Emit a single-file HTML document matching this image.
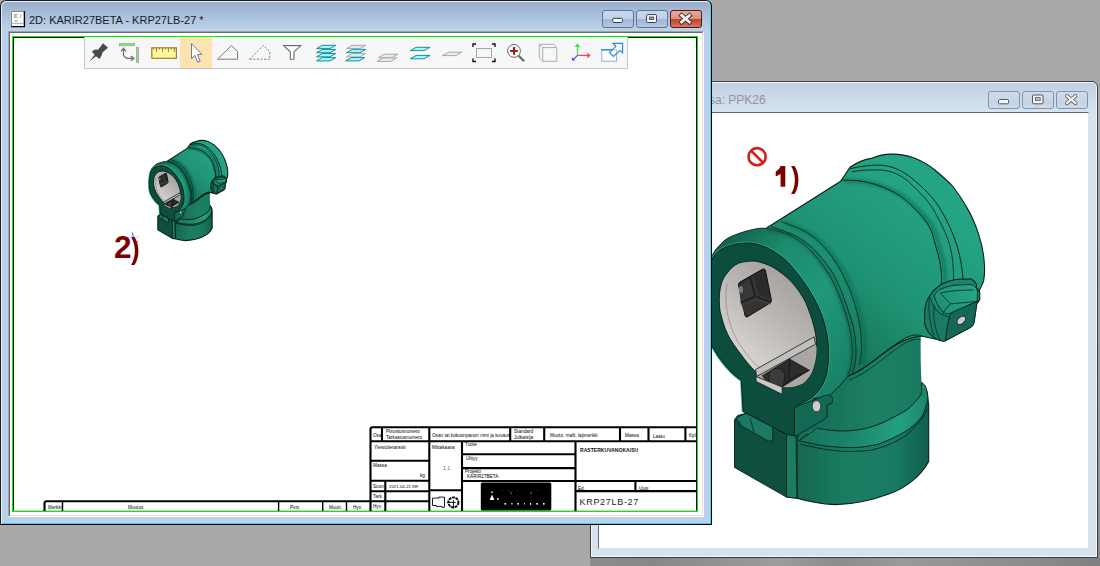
<!DOCTYPE html>
<html><head><meta charset="utf-8">
<style>
*{margin:0;padding:0;box-sizing:border-box}
html,body{width:1100px;height:566px;overflow:hidden;background:#a9a9a9;font-family:"Liberation Sans",sans-serif}
.abs{position:absolute}
svg{position:absolute;overflow:visible}
.tbtext{left:0;top:0}
.small path,.small ellipse{vector-effect:non-scaling-stroke}
.tbtext span{position:absolute;white-space:nowrap}
#desk-bottom{left:590px;top:558px;width:510px;height:8px;background:linear-gradient(90deg,#8c8c8c 0px,#878787 60px,#8f8f8f 110px,#9c9c9c 190px,#8b8b8b 250px,#9a9a9a 310px,#939393 370px,#8a8a8a 450px,#7f7f7f 510px)}
#desk-right{left:1098px;top:81px;width:2px;height:477px;background:linear-gradient(#a9a9a9,#a0a0a0 60%,#8a8a8a)}
/* right window */
#rw{left:590px;top:81px;width:508px;height:477px;border:1px solid #3a3a3a;border-radius:6px 6px 0 0;background:#d5e3f1;box-shadow:inset 1px 1px 0 #f4f8fc,inset -1px -1px 0 #f4f8fc}
#rw .tb{left:1px;top:1px;width:504px;height:30px;border-radius:5px 5px 0 0;background:linear-gradient(#c1d1e1,#d6e3f0)}
#rw .client{left:7px;top:30px;width:491px;height:437px;background:#fff;border-top:1px solid #666;border-left:1px solid #6d6d6d;border-right:1px solid #e2e2e2;border-bottom:1px solid #e2e2e2}
#rw .title{left:118px;top:10.8px;font-size:12px;color:#9a909c;white-space:nowrap}
.wbtn{position:absolute;top:9px;height:18px;width:32px;border:1px solid #8594ad;border-radius:3px;background:linear-gradient(#cfdceb 0,#c9d7e7 45%,#c3d3e4 55%,#cddbea 100%)}
/* left window */
#lw{left:0;top:0;width:712px;height:525px;border:1px solid #1c1c1c;border-right-color:#000;border-bottom-color:#000;border-radius:6px 6px 0 0;background:#b9d1ea;box-shadow:inset 1px 1px 0 #e8f0f8,inset -1px -1px 0 #44d0f0}
#lw .tb{left:1px;top:1px;width:708px;height:29px;border-radius:5px 5px 0 0;background:linear-gradient(#99afcc,#bcd3eb)}
#lw .client{left:7px;top:30px;width:696px;height:486px;background:#fff;border-top:1px solid #a0a0a0;border-left:1px solid #a0a0a0;border-right:1px solid #fff;border-bottom:1px solid #fff}
#lw .client .in{border-top:1px solid #6a6a6a;border-left:1px solid #6a6a6a}
#lw .client .in{left:0;top:0;right:0;bottom:0;border-right:1px solid #dedede;border-bottom:1px solid #dedede}
.lbtn{position:absolute;top:9px;height:18px;width:32px;border:1px solid #5f7594;border-radius:3px;background:linear-gradient(#c6d7eb 0,#bfd2e8 50%,#9fb7d3 52%,#b4cae3 100%)}
.cbtn{position:absolute;top:9px;height:18px;width:32px;border:1px solid #4c1a1f;border-radius:3px;background:linear-gradient(#eaa998 0,#df8e7a 50%,#c4432b 52%,#d9755c 100%)}
#green{left:12px;top:36px;width:686px;height:476px;border:1px solid #00f000}
#black{left:13px;top:37px;width:684px;height:474px;border:1px solid #000;border-bottom-color:#d8c8d8}
</style></head><body>
<div id="desk-bottom" class="abs"></div><div id="desk-right" class="abs"></div>

<div id="rw" class="abs">
  <div class="tb abs"></div>
  <div class="title abs">sa: PPK26</div>
  <div class="wbtn" style="left:397px"></div>
  <div class="wbtn" style="left:431px"></div>
  <div class="wbtn" style="left:465px"></div>
  <div class="client abs"></div>

 <svg width="508" height="477" style="left:-1px;top:-1px">
  <rect x="408.5" y="18.5" width="10" height="4.3" rx="1" fill="#f4f4f4" stroke="#55555f" stroke-width="1"/>
  <rect x="442.5" y="14" width="10.5" height="8.8" rx="1" fill="#f4f4f4" stroke="#55555f" stroke-width="1"/>
  <rect x="445.4" y="16.6" width="4.8" height="2.8" fill="#b4c4d4" stroke="#55555f" stroke-width="0.8"/>
  <path d="M477,15 L485.5,22.2 M485.5,15 L477,22.2" stroke="#606068" stroke-width="3.8" stroke-linecap="round"/>
  <path d="M477,15 L485.5,22.2 M485.5,15 L477,22.2" stroke="#f6f6f6" stroke-width="2.2" stroke-linecap="round"/>
 </svg>
</div>

<!--MODEL-->
<svg width="1100" height="566" style="left:0;top:0"><defs>
<filter id="gBlur" x="-20%" y="-20%" width="140%" height="140%"><feGaussianBlur stdDeviation="1.6"/></filter>
<linearGradient id="gSock" x1="797" y1="0" x2="929" y2="0" gradientUnits="userSpaceOnUse">
 <stop offset="0" stop-color="#14684f"/><stop offset="0.4" stop-color="#1a7e63"/><stop offset="0.75" stop-color="#197a61"/><stop offset="1" stop-color="#115e4b"/></linearGradient>
<linearGradient id="gBand" x1="797" y1="0" x2="929" y2="0" gradientUnits="userSpaceOnUse">
 <stop offset="0" stop-color="#16715a"/><stop offset="0.45" stop-color="#1d886b"/><stop offset="0.78" stop-color="#23a080"/><stop offset="1" stop-color="#1b8467"/></linearGradient>
<linearGradient id="gPipe" x1="820" y1="0" x2="922" y2="0" gradientUnits="userSpaceOnUse">
 <stop offset="0" stop-color="#166f58"/><stop offset="0.55" stop-color="#1c8064"/><stop offset="1" stop-color="#1a7a61"/></linearGradient>
<linearGradient id="gBody" x1="820" y1="340" x2="930" y2="200" gradientUnits="userSpaceOnUse">
 <stop offset="0" stop-color="#177459"/><stop offset="0.45" stop-color="#1f9373"/><stop offset="1" stop-color="#24a483"/></linearGradient>
<linearGradient id="gFlange" x1="712" y1="250" x2="850" y2="370" gradientUnits="userSpaceOnUse">
 <stop offset="0" stop-color="#12604c"/><stop offset="0.28" stop-color="#1c8b6c"/><stop offset="0.6" stop-color="#20987a"/><stop offset="1" stop-color="#1a8266"/></linearGradient>
<linearGradient id="gGray" x1="805" y1="275" x2="735" y2="360" gradientUnits="userSpaceOnUse">
 <stop offset="0" stop-color="#a09c99"/><stop offset="0.5" stop-color="#bcb8b5"/><stop offset="1" stop-color="#dcd8d5"/></linearGradient>
<linearGradient id="gLugTop" x1="930" y1="300" x2="975" y2="282" gradientUnits="userSpaceOnUse">
 <stop offset="0" stop-color="#1e9070"/><stop offset="1" stop-color="#26a686"/></linearGradient>
</defs><path d="M797,436 C830,430 880,422 921.6,384 L927,392 L928.7,404.7 L928.7,461.6 C921,476 906,488 889.5,493.8 C870,501 850,504.6 835.3,504.6 C822,504 808,501.5 797,498.2 Z" fill="url(#gSock)" stroke="#061f19" stroke-width="1.08"/>
<path d="M800,330 L921,334 L920.7,338 C920.5,355 920.8,370 921.6,384.1 L921.6,393 C919,398 917,400 913.7,403.6 C908,410 902,413 896,416 C887,421 878,425 869.5,427.4 C860,430 851,431 843,431 C834,431 825,429.5 816.5,428.3 L798.8,438.9 Z" fill="url(#gPipe)"/>
<path d="M816.5,428.3 C825,429.5 834,431 843,431 C851,431 860,430 869.5,427.4 C878,425 887,421 896,416 C902,413 908,410 913.7,403.6 C917,400 919,398 921.6,393 L921.6,382.4 C924,384 925.5,385.5 926,387.7 C927.5,392 928,396 927.8,400 C926.5,406 924.5,411 922.5,416 C917,423 911,428 904.8,431.8 C896,437 887,441 878.3,444.2 C869,446.5 860,447.5 851.8,447.7 C842,447.5 834,447 825.3,446 C816,444.5 807,442.5 798.8,440.7 Z" fill="url(#gBand)" stroke="#061f19" stroke-width="0.94"/>
<path d="M800.6,444.2 C814,447.5 828,450.5 843,451.3 C852,451.5 861,451.2 869.5,450.4 C882,448 894,443 904.8,436.3 C914,429 922,420 927.8,408.9" fill="none" stroke="#061f19" stroke-width="0.81"/>
<path d="M767,227.7 L840.7,181.3 L850.2,167 C858,162 866,159 871.2,158.4 C878,155.5 886,154 892.4,154.1 C900,154 907,155.5 913.6,157.7 C922,161 929,165 934.8,170 C942,176 948,181 952.5,186 C958,193 962,199 966.6,207.1 C972,216 976,226 979,235.4 C982,245 984,255 984.3,263.7 C985,270 984.5,276 983.6,281.3 L975,300 L944,341 L921,336 C905,338 895,344 873,361.5 C862,369 855,374 847.6,376.3 L830,380 Z" fill="url(#gBody)" stroke="#061f19" stroke-width="1.08"/>
<path d="M847.6,376.3 C860,372 866,366 873,361.5 C885,352 892,346 904.8,338.2 C911,335 916,334 921.8,336" fill="none" stroke="#061f19" stroke-width="0.94"/>
<path d="M849,380 C862,375 868,370 875,365 C887,356 894,350 906,342.5 C912,339.5 916,339 921,340" fill="none" stroke="#061f19" stroke-width="0.68"/>
<path d="M850.2,168.6 C862,166 873,164.5 883.6,165.4 C896,167 906,173 915.4,181.3 C927,191 935,200 940.9,210 C948,222 953,233 956.8,245 C960,256 962,266 963.1,279.5" fill="none" stroke="#061f19" stroke-width="0.94"/>
<path d="M851.8,171.8 C862,170 872,169.5 883.6,170.2 C896,172 906,178 913,186 C925,197 932,206 937,216 C944,229 949,240 951,251 C953,260 953.5,268 953.6,280" fill="none" stroke="#061f19" stroke-width="0.81"/>
<path d="M844.2,181.0 C847.4,181.2 857.0,181.0 863.5,182.0 C870.0,183.0 876.8,184.5 883.5,187.0 C890.2,189.5 897.2,192.7 903.5,197.0 C909.8,201.3 916.5,207.7 921.5,213.0 C926.5,218.3 930.6,223.5 933.5,229.0 C936.4,234.5 937.2,240.7 938.8,246.0 C940.4,251.3 942.0,256.0 943.0,261.0 C944.0,266.0 944.8,271.3 945.0,276.0 C945.2,280.7 944.6,286.8 944.5,289.0" fill="none" stroke="#0f5a48" stroke-width="5" stroke-opacity="0.4" filter="url(#gBlur)"/>
<path d="M840.7,180.0 C843.9,180.2 853.5,180.0 860.0,181.0 C866.5,182.0 873.3,183.5 880.0,186.0 C886.7,188.5 893.7,191.7 900.0,196.0 C906.3,200.3 913.0,206.7 918.0,212.0 C923.0,217.3 927.1,222.5 930.0,228.0 C932.9,233.5 933.7,239.7 935.3,245.0 C936.9,250.3 938.5,255.0 939.5,260.0 C940.5,265.0 941.2,270.3 941.5,275.0 C941.8,279.7 941.1,285.8 941.0,288.0" fill="none" stroke="#061f19" stroke-width="0.94"/>
<path d="M925.1,308.4 C926,303 927.5,299 929.5,296.3 C931.5,292.5 934,290 936.5,288 C940,285 944,283 948,281.6 C951,280.5 955,279.6 958.2,279.3 L970.9,279.1 C973,280 975,281.5 976,283.5 C977,285 976.8,287 976.6,288 C978,289.5 979.5,291 979.8,293.1 L979.8,299.4 C979,301.5 977.5,303 976.6,303.9 L974.1,322.3 C973.5,325 972,326.5 970.3,327.4 L945.4,340.8 C942,341.5 939,340.5 936.5,338.9 C931,336 927,331 925,325 C924.5,319 924.6,313 925.1,308.4 Z" fill="#1b8669" stroke="#061f19" stroke-width="1.08"/>
<path d="M934,296 C936,292 938,290 942,288.5 C947,286.5 952,285.5 958,285 L970,284.5 C974,285 976.5,287.5 977.5,291 L977.2,301.4 L951,313 C948,314.5 945,314 943,312 C939,308 936,302 934,296 Z" fill="url(#gLugTop)" stroke="#061f19" stroke-width="0.81"/>
<path d="M940.4,293.1 C948,291 962,290 973.4,289.9 M950.5,303.9 C947,307 944,311 942.3,314.7 M940.4,293.1 L950.5,303.9 L977.2,301.4" fill="none" stroke="#061f19" stroke-width="0.74"/>
<path d="M951,313 L977.2,301.4 L974.1,322.3 C973.5,325 972,326.5 970.3,327.4 L945.4,340.8 C946,333 947.5,324 949.3,317.3 C949.8,315.5 950.3,314 951,313 Z" fill="#136955" stroke="#061f19" stroke-width="0.81"/>
<path d="M925.1,308.4 C926,303 927.5,299 929.5,296.3 C931,300 932,303 934,306 C936,310 939,313 942.3,314.7 C946,316 948,316.5 949.3,317.3 C947.5,324 946,333 945.4,340.8 C942,341.5 939,340.5 936.5,338.9 C931,336 927,331 925,325 C924.5,319 924.6,313 925.1,308.4 Z" fill="#187b62" stroke="#061f19" stroke-width="0.74"/>
<path d="M929.5,296.3 C928,306 929,320 934,336 M934,306 C933,318 935,330 940,340" fill="none" stroke="#061f19" stroke-width="0.68"/>
<ellipse cx="961.3" cy="320.4" rx="5" ry="3.2" transform="rotate(-42 961.3 320.4)" fill="#cfcfcf" stroke="#262626" stroke-width="0.94"/>
<path d="M708.0,268.0 C708.8,265.7 711.0,257.8 713.0,254.0 C715.0,250.2 717.3,247.7 720.0,245.0 C722.7,242.3 724.2,240.0 729.0,237.6 C733.8,235.2 742.4,232.0 748.7,230.5 C755.1,229.0 759.8,227.5 767.1,228.5 C774.4,229.5 785.1,232.8 792.4,236.5 C799.7,240.2 805.1,244.9 810.8,250.6 C816.4,256.2 822.1,264.2 826.3,270.4 C830.5,276.6 833.0,281.4 836.0,288.0 C839.0,294.6 842.1,303.0 844.4,310.0 C846.7,317.0 848.7,323.3 850.0,330.0 C851.3,336.7 852.0,344.2 852.2,350.0 C852.4,355.8 851.8,360.6 851.0,365.0 C850.2,369.4 848.2,374.4 847.6,376.3 C840,386 834,392 826,398 L760,400 Z" fill="url(#gFlange)" stroke="#061f19" stroke-width="0.94"/>
<path d="M767.1,228.5 C771.3,229.8 785.1,232.8 792.4,236.5 C799.7,240.2 805.1,244.9 810.8,250.6 C816.4,256.2 822.1,264.2 826.3,270.4 C830.5,276.6 833.0,281.4 836.0,288.0 C839.0,294.6 842.1,303.0 844.4,310.0 C846.7,317.0 848.7,323.3 850.0,330.0 C851.3,336.7 852.0,344.2 852.2,350.0 C852.4,355.8 851.8,360.6 851.0,365.0 C850.2,369.4 848.2,374.4 847.6,376.3" fill="none" stroke="#0f5a48" stroke-width="4" stroke-opacity="0.55" filter="url(#gBlur)"/>
<path d="M781.0,221.5 C785.2,223.2 798.8,227.8 806.0,232.0 C813.2,236.2 818.7,241.3 824.0,247.0 C829.3,252.7 833.8,259.2 838.0,266.0 C842.2,272.8 845.9,280.7 849.0,288.0 C852.1,295.3 854.5,303.0 856.4,310.0 C858.3,317.0 859.7,323.3 860.5,330.0 C861.3,336.7 861.6,344.2 861.4,350.0 C861.2,355.8 859.8,362.5 859.5,365.0" fill="none" stroke="#0f5a48" stroke-width="5" stroke-opacity="0.35" filter="url(#gBlur)" transform="translate(3,1)"/>
<path d="M771.0,226.5 C775.3,228.2 789.5,232.7 796.6,236.5 C803.7,240.3 808.0,243.8 813.6,249.2 C819.2,254.6 825.6,262.5 830.0,269.0 C834.4,275.5 837.0,281.2 840.0,288.0 C843.0,294.8 845.7,303.0 848.0,310.0 C850.3,317.0 852.7,323.3 854.0,330.0 C855.3,336.7 855.8,344.3 856.0,350.0 C856.2,355.7 855.7,360.0 855.0,364.0 C854.3,368.0 852.5,372.3 852.0,374.0" fill="none" stroke="#061f19" stroke-width="0.8"/>
<path d="M781.0,221.5 C785.2,223.2 798.8,227.8 806.0,232.0 C813.2,236.2 818.7,241.3 824.0,247.0 C829.3,252.7 833.8,259.2 838.0,266.0 C842.2,272.8 845.9,280.7 849.0,288.0 C852.1,295.3 854.5,303.0 856.4,310.0 C858.3,317.0 859.7,323.3 860.5,330.0 C861.3,336.7 861.6,344.2 861.4,350.0 C861.2,355.8 859.8,362.5 859.5,365.0" fill="none" stroke="#061f19" stroke-width="0.75"/>
<path d="M708.0,268.0 C709.0,266.0 711.7,259.2 714.0,256.0 C716.3,252.8 718.5,250.9 722.0,249.0 C725.5,247.1 730.3,245.3 735.0,244.3 C739.7,243.3 745.1,242.6 750.0,243.0 C754.9,243.4 759.4,244.6 764.1,246.5 C768.8,248.4 774.3,251.5 778.3,254.2 C782.3,256.9 785.2,259.5 788.2,262.5 C791.2,265.5 793.8,268.9 796.6,272.4 C799.4,275.9 802.5,279.9 805.1,283.7 C807.7,287.5 810.0,291.1 812.2,295.0 C814.4,298.9 816.6,302.8 818.5,307.0 C820.4,311.2 822.1,315.3 823.5,320.0 C824.9,324.7 826.1,330.0 827.0,335.0 C827.9,340.0 828.4,345.0 828.6,350.0 C828.8,355.0 828.5,360.3 828.0,365.0 C827.5,369.7 826.8,374.0 825.5,378.0 C824.2,382.0 822.1,385.9 820.0,389.0 C817.9,392.1 815.2,394.6 813.0,396.5 C810.8,398.4 809.9,398.8 806.9,400.5 C803.9,402.2 797.2,405.8 795.3,406.8 L794.3,436.9 L786.5,434.5 L743,411.2 L741.3,380.5 C739.6,379.1 734.9,376.1 731.0,372.0 C727.1,367.9 722.0,362.3 718.0,356.0 C714.0,349.7 709.3,343.3 707.0,334.0 C704.7,324.7 703.8,311.0 704.0,300.0 C704.2,289.0 707.3,273.3 708.0,268.0 Z" fill="none" stroke="#2fb391" stroke-width="2.6" stroke-opacity="0.8"/>
<path d="M708.0,268.0 C709.0,266.0 711.7,259.2 714.0,256.0 C716.3,252.8 718.5,250.9 722.0,249.0 C725.5,247.1 730.3,245.3 735.0,244.3 C739.7,243.3 745.1,242.6 750.0,243.0 C754.9,243.4 759.4,244.6 764.1,246.5 C768.8,248.4 774.3,251.5 778.3,254.2 C782.3,256.9 785.2,259.5 788.2,262.5 C791.2,265.5 793.8,268.9 796.6,272.4 C799.4,275.9 802.5,279.9 805.1,283.7 C807.7,287.5 810.0,291.1 812.2,295.0 C814.4,298.9 816.6,302.8 818.5,307.0 C820.4,311.2 822.1,315.3 823.5,320.0 C824.9,324.7 826.1,330.0 827.0,335.0 C827.9,340.0 828.4,345.0 828.6,350.0 C828.8,355.0 828.5,360.3 828.0,365.0 C827.5,369.7 826.8,374.0 825.5,378.0 C824.2,382.0 822.1,385.9 820.0,389.0 C817.9,392.1 815.2,394.6 813.0,396.5 C810.8,398.4 809.9,398.8 806.9,400.5 C803.9,402.2 797.2,405.8 795.3,406.8 L794.3,436.9 L786.5,434.5 L743,411.2 L741.3,380.5 C739.6,379.1 734.9,376.1 731.0,372.0 C727.1,367.9 722.0,362.3 718.0,356.0 C714.0,349.7 709.3,343.3 707.0,334.0 C704.7,324.7 703.8,311.0 704.0,300.0 C704.2,289.0 707.3,273.3 708.0,268.0 Z" fill="#0d4d3e" stroke="#061f19" stroke-width="0.95"/>
<path d="M734.5,419.7 L737.7,415.5 L746.2,413.3 L786.5,434.5 L796,436 L797,498.2 L786.5,497.1 L734.5,467.4 Z" fill="#0e4f40" stroke="#061f19" stroke-width="0.94"/>
<path d="M786.5,434.5 L796,436 L797,498.2 L786.5,497.1 Z" fill="#1a7c62" stroke="#061f19" stroke-width="0.81"/>
<path d="M736,418 L746.2,413.3 L772.7,427.1 L772.7,441 L768,441 L740,425 Z" fill="#1b7a61" stroke="#061f19" stroke-width="0.81"/>
<path d="M740,425 L740,421 M750,418 L754,432" fill="none" stroke="#061f19" stroke-width="0.68"/>
<path d="M794.4,408 C800,405 806,403 818.3,398.3 C823,396.5 826,394 829.8,395.6 C831.5,396.5 832.4,397.5 832.4,398.3 L832.4,402.7 L827.1,405.3 L827.1,416.8 L822.7,420.4 L796,436 L794.4,436 Z" fill="#146954" stroke="#061f19" stroke-width="0.81"/>
<ellipse cx="816.5" cy="406.2" rx="4.3" ry="5.6" fill="#cdcdcd" stroke="#2a2a2a" stroke-width="0.81"/>
<path d="M738.5,263.2 C744,261.5 749,261 754.4,261.1 C761,262 767,264 772.9,267.2 C779,271 786,276 791.5,281.8 C797,288 802,295 806,303 C809,311 812,318 814,326.8 C816,334 816.7,341 816.7,348 C816.7,356 815,365 811.8,372.8 C809,378 806,381 803,383.5 C798,386 794,387 789.4,387.3 L782.6,387.3 L754.4,370.5 C749,365 745,360 741.1,354.6 C736,348 731,341 727.9,334.8 C724,327 722,319 720,311 C719,303 719,296 720,289.7 C721,283 723,278 726.6,273.8 C730,269 734,265 738.5,263.2 Z" fill="url(#gGray)" stroke="#061f19" stroke-width="0.94"/>
<path d="M727,284 C724,300 727,322 737,340 C745,353 752,362 760,368" fill="none" stroke="#8a8683" stroke-width="0.68"/>
<path d="M738.5,285 C738.5,283 739.5,282 741,281.5 L762,269.5 C764,268.5 765,269 765.5,271 L771.3,299.5 C771.8,301.5 771,302.5 769.5,303.3 L748,316.5 C746.5,317.5 745.5,317 745,315.5 Z" fill="#2b2b2b" stroke="#0e0e0e" stroke-width="1"/>
<path d="M739,286 L750,278 L755,296.5 L740.6,302.4 Z" fill="#383838"/>
<path d="M740.6,302.4 L755,296.5 L771,302 L748,316 L745.5,315 Z" fill="#333"/>
<path d="M750,278 L755,296.5 L771,302 M755,296.5 L740.6,302.4" fill="none" stroke="#0e0e0e" stroke-width="0.8"/>
<path d="M752.6,277 L757.4,295.2 L771,300.5 M757.4,295.2 L756,298.2 M742,305.5 L756,299.5 L771.3,304" fill="none" stroke="#4a4a4a" stroke-width="0.7"/>
<ellipse cx="741" cy="289.5" rx="2" ry="3.6" fill="#7a7a7a"/>
<path d="M756.7,376.4 L815.5,344.2 L816.7,348 C816.7,356 815,365 811.8,372.8 C809,378 806,381 803,383.5 C798,386 794,387 789.4,387.3 L782.6,387.3 Z" fill="#aaa6a3"/>
<path d="M762.3,375.7 L789.5,359 L809.3,370.2 L783.3,386.2 L770,386 Z" fill="#2c2c2c" stroke="#111" stroke-width="0.7"/>
<path d="M789.5,359 L789,380 L809.3,370.2 M789,380 L783.3,386.2" fill="none" stroke="#111" stroke-width="0.7"/>
<path d="M768.5,379 C768.5,372 772.5,367.8 778.4,368.2 C783,369 785.2,373 784.6,378.5 L783.3,386.2 L770,386 Z" fill="#3c3c3c" stroke="#111" stroke-width="0.7"/>
<path d="M755.5,369.6 L814.2,336.8 L815.5,344.2 L756.7,376.4 Z" fill="#c3bfbc" stroke="#061f19" stroke-width="0.8"/>
<path d="M755.8,376.5 L782.1,387 L782.1,394.3 L756.3,381.5 Z" fill="#ccc8c5" stroke="#061f19" stroke-width="0.7"/><circle cx="757.1" cy="156.7" r="8.6" fill="none" stroke="#d81c1c" stroke-width="2.6"/><path d="M751,150.6 L763.2,162.8" stroke="#d81c1c" stroke-width="2.6"/></svg>
<!--/MODEL-->
<svg width="1100" height="566" style="left:0;top:0"><path d="M780.6,166 H785.3 V186.8 H780.6 V174 L775.7,176.6 V171.6 C778,170.3 779.6,168.5 780.6,166 Z" fill="#7b0000"/></svg>
<div class="abs" style="left:791px;top:164.2px;font-weight:bold;font-size:29px;line-height:1;color:#7b0000;transform:scaleX(0.9);transform-origin:0 0">)</div>
<div id="lw" class="abs">
  <div class="tb abs"></div>
  <div class="lbtn" style="left:601px"></div>
  <div class="lbtn" style="left:635px"></div>
  <div class="cbtn" style="left:669px"></div>
  <div id="lt" class="abs" style="left:28px;top:12.8px;font-size:11px;color:#1a1a2a;white-space:nowrap">2D: KARIR27BETA - KRP27LB-27 *</div>
  <div class="client abs"><div class="in abs"></div></div>
</div>

<svg width="1100" height="566" style="left:0;top:0">
 <!-- window icon -->
 <rect x="11.5" y="11.5" width="13" height="15" fill="#fff" stroke="#8a8a8a" stroke-width="1"/>
 <path d="M24.4,11.2 V26.6 H11.2" fill="none" stroke="#000" stroke-width="1.4"/>
 <path d="M17.6,14.4 H14.6 V17.6 H17.6 M14.6,16 H17" fill="none" stroke="#9a9a9a" stroke-width="0.9"/>
 <path d="M20,17.8 L21.4,14.2" stroke="#a0a0a0" stroke-width="0.9"/>
 <path d="M14,20.2 H18 L16,21.9 Z" fill="#9a9a9a"/>
 <path d="M12,23.3 H24 M17.5,23.3 V24.5 M20.5,23.3 V24.5" stroke="#9a9a9a" stroke-width="0.8"/>
 <!-- left window button glyphs -->
 <rect x="612.8" y="18.3" width="9.6" height="4.2" rx="1" fill="#fff" stroke="#2e3a52" stroke-width="1"/>
 <rect x="646.6" y="14.6" width="9.8" height="7.9" rx="1" fill="#fff" stroke="#2e3a52" stroke-width="1"/>
 <rect x="649.3" y="17" width="4.4" height="2.4" fill="#8aa6c8" stroke="#2e3a52" stroke-width="0.8"/>
 <path d="M681.6,15.4 L689.4,22 M689.4,15.4 L681.6,22" stroke="#3c3038" stroke-width="4.6" stroke-linecap="square"/>
 <path d="M681.6,15.4 L689.4,22 M689.4,15.4 L681.6,22" stroke="#f4f4f4" stroke-width="2.8" stroke-linecap="square"/>
</svg>
<div id="green" class="abs"></div>
<!--SMALL-->
<svg class="small" width="1100" height="566" style="left:0;top:0"><g transform="matrix(0.28 0 0 0.286 -47.9 96.3)"><defs>
<filter id="sBlur" x="-20%" y="-20%" width="140%" height="140%"><feGaussianBlur stdDeviation="1.6"/></filter>
<linearGradient id="sSock" x1="797" y1="0" x2="929" y2="0" gradientUnits="userSpaceOnUse">
 <stop offset="0" stop-color="#14684f"/><stop offset="0.4" stop-color="#1a7e63"/><stop offset="0.75" stop-color="#197a61"/><stop offset="1" stop-color="#115e4b"/></linearGradient>
<linearGradient id="sBand" x1="797" y1="0" x2="929" y2="0" gradientUnits="userSpaceOnUse">
 <stop offset="0" stop-color="#16715a"/><stop offset="0.45" stop-color="#1d886b"/><stop offset="0.78" stop-color="#23a080"/><stop offset="1" stop-color="#1b8467"/></linearGradient>
<linearGradient id="sPipe" x1="820" y1="0" x2="922" y2="0" gradientUnits="userSpaceOnUse">
 <stop offset="0" stop-color="#166f58"/><stop offset="0.55" stop-color="#1c8064"/><stop offset="1" stop-color="#1a7a61"/></linearGradient>
<linearGradient id="sBody" x1="820" y1="340" x2="930" y2="200" gradientUnits="userSpaceOnUse">
 <stop offset="0" stop-color="#177459"/><stop offset="0.45" stop-color="#1f9373"/><stop offset="1" stop-color="#24a483"/></linearGradient>
<linearGradient id="sFlange" x1="712" y1="250" x2="850" y2="370" gradientUnits="userSpaceOnUse">
 <stop offset="0" stop-color="#12604c"/><stop offset="0.28" stop-color="#1c8b6c"/><stop offset="0.6" stop-color="#20987a"/><stop offset="1" stop-color="#1a8266"/></linearGradient>
<linearGradient id="sGray" x1="805" y1="275" x2="735" y2="360" gradientUnits="userSpaceOnUse">
 <stop offset="0" stop-color="#a09c99"/><stop offset="0.5" stop-color="#bcb8b5"/><stop offset="1" stop-color="#dcd8d5"/></linearGradient>
<linearGradient id="sLugTop" x1="930" y1="300" x2="975" y2="282" gradientUnits="userSpaceOnUse">
 <stop offset="0" stop-color="#1e9070"/><stop offset="1" stop-color="#26a686"/></linearGradient>
</defs><path d="M797,436 C830,430 880,422 921.6,384 L927,392 L928.7,404.7 L928.7,461.6 C921,476 906,488 889.5,493.8 C870,501 850,504.6 835.3,504.6 C822,504 808,501.5 797,498.2 Z" fill="url(#sSock)" stroke="#061f19" stroke-width="1.08"/>
<path d="M800,330 L921,334 L920.7,338 C920.5,355 920.8,370 921.6,384.1 L921.6,393 C919,398 917,400 913.7,403.6 C908,410 902,413 896,416 C887,421 878,425 869.5,427.4 C860,430 851,431 843,431 C834,431 825,429.5 816.5,428.3 L798.8,438.9 Z" fill="url(#sPipe)"/>
<path d="M816.5,428.3 C825,429.5 834,431 843,431 C851,431 860,430 869.5,427.4 C878,425 887,421 896,416 C902,413 908,410 913.7,403.6 C917,400 919,398 921.6,393 L921.6,382.4 C924,384 925.5,385.5 926,387.7 C927.5,392 928,396 927.8,400 C926.5,406 924.5,411 922.5,416 C917,423 911,428 904.8,431.8 C896,437 887,441 878.3,444.2 C869,446.5 860,447.5 851.8,447.7 C842,447.5 834,447 825.3,446 C816,444.5 807,442.5 798.8,440.7 Z" fill="url(#sBand)" stroke="#061f19" stroke-width="0.94"/>
<path d="M800.6,444.2 C814,447.5 828,450.5 843,451.3 C852,451.5 861,451.2 869.5,450.4 C882,448 894,443 904.8,436.3 C914,429 922,420 927.8,408.9" fill="none" stroke="#061f19" stroke-width="0.81"/>
<path d="M767,227.7 L840.7,181.3 L850.2,167 C858,162 866,159 871.2,158.4 C878,155.5 886,154 892.4,154.1 C900,154 907,155.5 913.6,157.7 C922,161 929,165 934.8,170 C942,176 948,181 952.5,186 C958,193 962,199 966.6,207.1 C972,216 976,226 979,235.4 C982,245 984,255 984.3,263.7 C985,270 984.5,276 983.6,281.3 L975,300 L944,341 L921,336 C905,338 895,344 873,361.5 C862,369 855,374 847.6,376.3 L830,380 Z" fill="url(#sBody)" stroke="#061f19" stroke-width="1.08"/>
<path d="M847.6,376.3 C860,372 866,366 873,361.5 C885,352 892,346 904.8,338.2 C911,335 916,334 921.8,336" fill="none" stroke="#061f19" stroke-width="0.94"/>
<path d="M849,380 C862,375 868,370 875,365 C887,356 894,350 906,342.5 C912,339.5 916,339 921,340" fill="none" stroke="#061f19" stroke-width="0.68"/>
<path d="M850.2,168.6 C862,166 873,164.5 883.6,165.4 C896,167 906,173 915.4,181.3 C927,191 935,200 940.9,210 C948,222 953,233 956.8,245 C960,256 962,266 963.1,279.5" fill="none" stroke="#061f19" stroke-width="0.94"/>
<path d="M851.8,171.8 C862,170 872,169.5 883.6,170.2 C896,172 906,178 913,186 C925,197 932,206 937,216 C944,229 949,240 951,251 C953,260 953.5,268 953.6,280" fill="none" stroke="#061f19" stroke-width="0.81"/>
<path d="M844.2,181.0 C847.4,181.2 857.0,181.0 863.5,182.0 C870.0,183.0 876.8,184.5 883.5,187.0 C890.2,189.5 897.2,192.7 903.5,197.0 C909.8,201.3 916.5,207.7 921.5,213.0 C926.5,218.3 930.6,223.5 933.5,229.0 C936.4,234.5 937.2,240.7 938.8,246.0 C940.4,251.3 942.0,256.0 943.0,261.0 C944.0,266.0 944.8,271.3 945.0,276.0 C945.2,280.7 944.6,286.8 944.5,289.0" fill="none" stroke="#0f5a48" stroke-width="5" stroke-opacity="0.4" filter="url(#sBlur)"/>
<path d="M840.7,180.0 C843.9,180.2 853.5,180.0 860.0,181.0 C866.5,182.0 873.3,183.5 880.0,186.0 C886.7,188.5 893.7,191.7 900.0,196.0 C906.3,200.3 913.0,206.7 918.0,212.0 C923.0,217.3 927.1,222.5 930.0,228.0 C932.9,233.5 933.7,239.7 935.3,245.0 C936.9,250.3 938.5,255.0 939.5,260.0 C940.5,265.0 941.2,270.3 941.5,275.0 C941.8,279.7 941.1,285.8 941.0,288.0" fill="none" stroke="#061f19" stroke-width="0.94"/>
<path d="M925.1,308.4 C926,303 927.5,299 929.5,296.3 C931.5,292.5 934,290 936.5,288 C940,285 944,283 948,281.6 C951,280.5 955,279.6 958.2,279.3 L970.9,279.1 C973,280 975,281.5 976,283.5 C977,285 976.8,287 976.6,288 C978,289.5 979.5,291 979.8,293.1 L979.8,299.4 C979,301.5 977.5,303 976.6,303.9 L974.1,322.3 C973.5,325 972,326.5 970.3,327.4 L945.4,340.8 C942,341.5 939,340.5 936.5,338.9 C931,336 927,331 925,325 C924.5,319 924.6,313 925.1,308.4 Z" fill="#1b8669" stroke="#061f19" stroke-width="1.08"/>
<path d="M934,296 C936,292 938,290 942,288.5 C947,286.5 952,285.5 958,285 L970,284.5 C974,285 976.5,287.5 977.5,291 L977.2,301.4 L951,313 C948,314.5 945,314 943,312 C939,308 936,302 934,296 Z" fill="url(#sLugTop)" stroke="#061f19" stroke-width="0.81"/>
<path d="M940.4,293.1 C948,291 962,290 973.4,289.9 M950.5,303.9 C947,307 944,311 942.3,314.7 M940.4,293.1 L950.5,303.9 L977.2,301.4" fill="none" stroke="#061f19" stroke-width="0.74"/>
<path d="M951,313 L977.2,301.4 L974.1,322.3 C973.5,325 972,326.5 970.3,327.4 L945.4,340.8 C946,333 947.5,324 949.3,317.3 C949.8,315.5 950.3,314 951,313 Z" fill="#136955" stroke="#061f19" stroke-width="0.81"/>
<path d="M925.1,308.4 C926,303 927.5,299 929.5,296.3 C931,300 932,303 934,306 C936,310 939,313 942.3,314.7 C946,316 948,316.5 949.3,317.3 C947.5,324 946,333 945.4,340.8 C942,341.5 939,340.5 936.5,338.9 C931,336 927,331 925,325 C924.5,319 924.6,313 925.1,308.4 Z" fill="#187b62" stroke="#061f19" stroke-width="0.74"/>
<path d="M929.5,296.3 C928,306 929,320 934,336 M934,306 C933,318 935,330 940,340" fill="none" stroke="#061f19" stroke-width="0.68"/>
<ellipse cx="961.3" cy="320.4" rx="5" ry="3.2" transform="rotate(-42 961.3 320.4)" fill="#cfcfcf" stroke="#262626" stroke-width="0.94"/>
<path d="M708.0,268.0 C708.8,265.7 711.0,257.8 713.0,254.0 C715.0,250.2 717.3,247.7 720.0,245.0 C722.7,242.3 724.2,240.0 729.0,237.6 C733.8,235.2 742.4,232.0 748.7,230.5 C755.1,229.0 759.8,227.5 767.1,228.5 C774.4,229.5 785.1,232.8 792.4,236.5 C799.7,240.2 805.1,244.9 810.8,250.6 C816.4,256.2 822.1,264.2 826.3,270.4 C830.5,276.6 833.0,281.4 836.0,288.0 C839.0,294.6 842.1,303.0 844.4,310.0 C846.7,317.0 848.7,323.3 850.0,330.0 C851.3,336.7 852.0,344.2 852.2,350.0 C852.4,355.8 851.8,360.6 851.0,365.0 C850.2,369.4 848.2,374.4 847.6,376.3 C840,386 834,392 826,398 L760,400 Z" fill="url(#sFlange)" stroke="#061f19" stroke-width="0.94"/>
<path d="M767.1,228.5 C771.3,229.8 785.1,232.8 792.4,236.5 C799.7,240.2 805.1,244.9 810.8,250.6 C816.4,256.2 822.1,264.2 826.3,270.4 C830.5,276.6 833.0,281.4 836.0,288.0 C839.0,294.6 842.1,303.0 844.4,310.0 C846.7,317.0 848.7,323.3 850.0,330.0 C851.3,336.7 852.0,344.2 852.2,350.0 C852.4,355.8 851.8,360.6 851.0,365.0 C850.2,369.4 848.2,374.4 847.6,376.3" fill="none" stroke="#0f5a48" stroke-width="4" stroke-opacity="0.55" filter="url(#sBlur)"/>
<path d="M781.0,221.5 C785.2,223.2 798.8,227.8 806.0,232.0 C813.2,236.2 818.7,241.3 824.0,247.0 C829.3,252.7 833.8,259.2 838.0,266.0 C842.2,272.8 845.9,280.7 849.0,288.0 C852.1,295.3 854.5,303.0 856.4,310.0 C858.3,317.0 859.7,323.3 860.5,330.0 C861.3,336.7 861.6,344.2 861.4,350.0 C861.2,355.8 859.8,362.5 859.5,365.0" fill="none" stroke="#0f5a48" stroke-width="5" stroke-opacity="0.35" filter="url(#sBlur)" transform="translate(3,1)"/>
<path d="M771.0,226.5 C775.3,228.2 789.5,232.7 796.6,236.5 C803.7,240.3 808.0,243.8 813.6,249.2 C819.2,254.6 825.6,262.5 830.0,269.0 C834.4,275.5 837.0,281.2 840.0,288.0 C843.0,294.8 845.7,303.0 848.0,310.0 C850.3,317.0 852.7,323.3 854.0,330.0 C855.3,336.7 855.8,344.3 856.0,350.0 C856.2,355.7 855.7,360.0 855.0,364.0 C854.3,368.0 852.5,372.3 852.0,374.0" fill="none" stroke="#061f19" stroke-width="0.8"/>
<path d="M781.0,221.5 C785.2,223.2 798.8,227.8 806.0,232.0 C813.2,236.2 818.7,241.3 824.0,247.0 C829.3,252.7 833.8,259.2 838.0,266.0 C842.2,272.8 845.9,280.7 849.0,288.0 C852.1,295.3 854.5,303.0 856.4,310.0 C858.3,317.0 859.7,323.3 860.5,330.0 C861.3,336.7 861.6,344.2 861.4,350.0 C861.2,355.8 859.8,362.5 859.5,365.0" fill="none" stroke="#061f19" stroke-width="0.75"/>
<path d="M708.0,268.0 C709.0,266.0 711.7,259.2 714.0,256.0 C716.3,252.8 718.5,250.9 722.0,249.0 C725.5,247.1 730.3,245.3 735.0,244.3 C739.7,243.3 745.1,242.6 750.0,243.0 C754.9,243.4 759.4,244.6 764.1,246.5 C768.8,248.4 774.3,251.5 778.3,254.2 C782.3,256.9 785.2,259.5 788.2,262.5 C791.2,265.5 793.8,268.9 796.6,272.4 C799.4,275.9 802.5,279.9 805.1,283.7 C807.7,287.5 810.0,291.1 812.2,295.0 C814.4,298.9 816.6,302.8 818.5,307.0 C820.4,311.2 822.1,315.3 823.5,320.0 C824.9,324.7 826.1,330.0 827.0,335.0 C827.9,340.0 828.4,345.0 828.6,350.0 C828.8,355.0 828.5,360.3 828.0,365.0 C827.5,369.7 826.8,374.0 825.5,378.0 C824.2,382.0 822.1,385.9 820.0,389.0 C817.9,392.1 815.2,394.6 813.0,396.5 C810.8,398.4 809.9,398.8 806.9,400.5 C803.9,402.2 797.2,405.8 795.3,406.8 L794.3,436.9 L786.5,434.5 L743,411.2 L741.3,380.5 C739.6,379.1 734.9,376.1 731.0,372.0 C727.1,367.9 722.0,362.3 718.0,356.0 C714.0,349.7 709.3,343.3 707.0,334.0 C704.7,324.7 703.8,311.0 704.0,300.0 C704.2,289.0 707.3,273.3 708.0,268.0 Z" fill="none" stroke="#2fb391" stroke-width="2.6" stroke-opacity="0.8"/>
<path d="M708.0,268.0 C709.0,266.0 711.7,259.2 714.0,256.0 C716.3,252.8 718.5,250.9 722.0,249.0 C725.5,247.1 730.3,245.3 735.0,244.3 C739.7,243.3 745.1,242.6 750.0,243.0 C754.9,243.4 759.4,244.6 764.1,246.5 C768.8,248.4 774.3,251.5 778.3,254.2 C782.3,256.9 785.2,259.5 788.2,262.5 C791.2,265.5 793.8,268.9 796.6,272.4 C799.4,275.9 802.5,279.9 805.1,283.7 C807.7,287.5 810.0,291.1 812.2,295.0 C814.4,298.9 816.6,302.8 818.5,307.0 C820.4,311.2 822.1,315.3 823.5,320.0 C824.9,324.7 826.1,330.0 827.0,335.0 C827.9,340.0 828.4,345.0 828.6,350.0 C828.8,355.0 828.5,360.3 828.0,365.0 C827.5,369.7 826.8,374.0 825.5,378.0 C824.2,382.0 822.1,385.9 820.0,389.0 C817.9,392.1 815.2,394.6 813.0,396.5 C810.8,398.4 809.9,398.8 806.9,400.5 C803.9,402.2 797.2,405.8 795.3,406.8 L794.3,436.9 L786.5,434.5 L743,411.2 L741.3,380.5 C739.6,379.1 734.9,376.1 731.0,372.0 C727.1,367.9 722.0,362.3 718.0,356.0 C714.0,349.7 709.3,343.3 707.0,334.0 C704.7,324.7 703.8,311.0 704.0,300.0 C704.2,289.0 707.3,273.3 708.0,268.0 Z" fill="#0d4d3e" stroke="#061f19" stroke-width="0.95"/>
<path d="M734.5,419.7 L737.7,415.5 L746.2,413.3 L786.5,434.5 L796,436 L797,498.2 L786.5,497.1 L734.5,467.4 Z" fill="#0e4f40" stroke="#061f19" stroke-width="0.94"/>
<path d="M786.5,434.5 L796,436 L797,498.2 L786.5,497.1 Z" fill="#1a7c62" stroke="#061f19" stroke-width="0.81"/>
<path d="M736,418 L746.2,413.3 L772.7,427.1 L772.7,441 L768,441 L740,425 Z" fill="#1b7a61" stroke="#061f19" stroke-width="0.81"/>
<path d="M740,425 L740,421 M750,418 L754,432" fill="none" stroke="#061f19" stroke-width="0.68"/>
<path d="M794.4,408 C800,405 806,403 818.3,398.3 C823,396.5 826,394 829.8,395.6 C831.5,396.5 832.4,397.5 832.4,398.3 L832.4,402.7 L827.1,405.3 L827.1,416.8 L822.7,420.4 L796,436 L794.4,436 Z" fill="#146954" stroke="#061f19" stroke-width="0.81"/>
<ellipse cx="816.5" cy="406.2" rx="4.3" ry="5.6" fill="#cdcdcd" stroke="#2a2a2a" stroke-width="0.81"/>
<path d="M738.5,263.2 C744,261.5 749,261 754.4,261.1 C761,262 767,264 772.9,267.2 C779,271 786,276 791.5,281.8 C797,288 802,295 806,303 C809,311 812,318 814,326.8 C816,334 816.7,341 816.7,348 C816.7,356 815,365 811.8,372.8 C809,378 806,381 803,383.5 C798,386 794,387 789.4,387.3 L782.6,387.3 L754.4,370.5 C749,365 745,360 741.1,354.6 C736,348 731,341 727.9,334.8 C724,327 722,319 720,311 C719,303 719,296 720,289.7 C721,283 723,278 726.6,273.8 C730,269 734,265 738.5,263.2 Z" fill="url(#sGray)" stroke="#061f19" stroke-width="0.94"/>
<path d="M727,284 C724,300 727,322 737,340 C745,353 752,362 760,368" fill="none" stroke="#8a8683" stroke-width="0.68"/>
<path d="M738.5,285 C738.5,283 739.5,282 741,281.5 L762,269.5 C764,268.5 765,269 765.5,271 L771.3,299.5 C771.8,301.5 771,302.5 769.5,303.3 L748,316.5 C746.5,317.5 745.5,317 745,315.5 Z" fill="#2b2b2b" stroke="#0e0e0e" stroke-width="1"/>
<path d="M739,286 L750,278 L755,296.5 L740.6,302.4 Z" fill="#383838"/>
<path d="M740.6,302.4 L755,296.5 L771,302 L748,316 L745.5,315 Z" fill="#333"/>
<path d="M750,278 L755,296.5 L771,302 M755,296.5 L740.6,302.4" fill="none" stroke="#0e0e0e" stroke-width="0.8"/>
<path d="M752.6,277 L757.4,295.2 L771,300.5 M757.4,295.2 L756,298.2 M742,305.5 L756,299.5 L771.3,304" fill="none" stroke="#4a4a4a" stroke-width="0.7"/>
<ellipse cx="741" cy="289.5" rx="2" ry="3.6" fill="#7a7a7a"/>
<path d="M756.7,376.4 L815.5,344.2 L816.7,348 C816.7,356 815,365 811.8,372.8 C809,378 806,381 803,383.5 C798,386 794,387 789.4,387.3 L782.6,387.3 Z" fill="#aaa6a3"/>
<path d="M762.3,375.7 L789.5,359 L809.3,370.2 L783.3,386.2 L770,386 Z" fill="#2c2c2c" stroke="#111" stroke-width="0.7"/>
<path d="M789.5,359 L789,380 L809.3,370.2 M789,380 L783.3,386.2" fill="none" stroke="#111" stroke-width="0.7"/>
<path d="M768.5,379 C768.5,372 772.5,367.8 778.4,368.2 C783,369 785.2,373 784.6,378.5 L783.3,386.2 L770,386 Z" fill="#3c3c3c" stroke="#111" stroke-width="0.7"/>
<path d="M755.5,369.6 L814.2,336.8 L815.5,344.2 L756.7,376.4 Z" fill="#c3bfbc" stroke="#061f19" stroke-width="0.8"/>
<path d="M755.8,376.5 L782.1,387 L782.1,394.3 L756.3,381.5 Z" fill="#ccc8c5" stroke="#061f19" stroke-width="0.7"/></g></svg>
<!--/SMALL-->
<div class="abs" style="left:113.9px;top:232.4px;font-weight:bold;font-size:31.5px;line-height:1;color:#7b0000;transform:scaleX(1);transform-origin:0 0">2</div>
<div class="abs" style="left:131px;top:235.1px;font-weight:bold;font-size:29px;line-height:1;color:#7b0000;transform:scaleX(0.9);transform-origin:0 0">)</div>
<svg width="1100" height="566" style="left:0;top:0"><path d="M132.3,232.5 L133.2,236 L132.5,238.5" stroke="#2030ff" stroke-width="0.9" fill="none"/><path d="M136.5,238 L138.5,236.3" stroke="#40e040" stroke-width="0.9"/><path d="M137,241 L138,242" stroke="#ff2020" stroke-width="0.9"/></svg>

<div id="black" class="abs"></div>

<div class="abs" style="left:84px;top:37px;width:544px;height:32px;background:#f7f7f7;border:1px solid #c6c6c6;border-top:none"></div>
<div class="abs" style="left:180px;top:37px;width:32px;height:31px;background:#fde3b1"></div>
<svg width="1100" height="566" style="left:0;top:0">
 <!-- pin -->
 <path d="M103.1,43.2 L108,47.8 L102.4,52.5 L101.7,55.2 L99.6,58.9 L96,56.3 L89.3,61.7 L94.6,54.8 L91.8,51.5 L95,49.4 L98.1,49.7 Z" fill="#4a4a4a"/>
 <!-- dimension -->
 <rect x="119.5" y="43.5" width="15" height="2.2" fill="#7cf060" stroke="#a49ca4" stroke-width="0.8"/>
 <rect x="136.5" y="47.3" width="2" height="15" fill="#7cf060" stroke="#a49ca4" stroke-width="0.8"/>
 <path d="M123.5,49 V55.5 L126.5,58.4 H133" fill="none" stroke="#6e6e6e" stroke-width="1.3"/>
 <path d="M121,51.3 L123.5,48.3 L126,51.3 M130.8,56 L133.8,58.4 L130.8,60.8" fill="none" stroke="#6e6e6e" stroke-width="1.3"/>
 <!-- ruler -->
 <rect x="151.8" y="47.8" width="24.6" height="10.5" fill="#fff89c" stroke="#a57c2a" stroke-width="1.2"/>
 <path d="M156.5,48 V51.8 M162.5,48 V51.8 M168.4,48 V51.8 M174.4,48 V51.8 M153.6,48 V49.5 M159.5,48 V49.5 M165.5,48 V49.5 M171.4,48 V49.5" stroke="#8a7040" stroke-width="0.9"/>
 <!-- cursor -->
 <path d="M191.5,43.5 V58.5 L194.9,55.4 L197.8,62.3 L200.2,61.2 L197.5,54.6 L201.8,54.3 Z" fill="#fff" stroke="#6f7c8c" stroke-width="1"/>
 <!-- triangles -->
 <path d="M217.5,59.2 L231.5,45.5 L237.6,51.4 V59.2 Z" fill="none" stroke="#7a7a7a" stroke-width="1"/>
 <path d="M249.5,59.2 L263.3,45.5 L269.7,51.4 V59.2 Z" fill="none" stroke="#7a7a7a" stroke-width="1" stroke-dasharray="2,1.6"/>
 <!-- funnel -->
 <path d="M283.6,45.6 H300.8 L294,51.8 V59.3 H290.3 V51.8 Z" fill="#fff" stroke="#707070" stroke-width="1.1"/>
 <!-- layers teal x4 -->
 <g fill="#a4f6fa" stroke="#15909a" stroke-width="1">
  <path d="M316.5,48.6 L322.3,45.3 H335.8 L330,48.6 Z"/>
  <path d="M316.5,52.7 L322.3,49.4 H335.8 L330,52.7 Z"/>
  <path d="M316.5,56.8 L322.3,53.5 H335.8 L330,56.8 Z"/>
  <path d="M316.5,60.9 L322.3,57.6 H335.8 L330,60.9 Z"/>
 </g>
 <g stroke-width="1">
  <path d="M346.5,48.6 L352.3,45.3 H365.8 L360,48.6 Z" fill="#e6e6ec" stroke="#a8a8a8"/>
  <path d="M346.5,52.7 L352.3,49.4 H365.8 L360,52.7 Z" fill="#a4f6fa" stroke="#15909a"/>
  <path d="M346.5,56.8 L352.3,53.5 H365.8 L360,56.8 Z" fill="#e6e6ec" stroke="#a8a8a8"/>
  <path d="M345.5,60.9 L351.3,57.6 H364.8 L359,60.9 Z" fill="#a4f6fa" stroke="#15909a"/>
 </g>
 <g fill="#ececf0" stroke="#a8a8a8" stroke-width="1">
  <path d="M378.3,57.8 L384.3,54.2 H397.8 L391.8,57.8 Z"/>
  <path d="M377.3,61.4 L383.3,57.9 H396.8 L390.8,61.4 Z"/>
  <path d="M442.4,55.6 L448.8,52.2 H461.8 L455.6,55.6 Z"/>
 </g>
 <g fill="#a4f6fa" stroke="#15909a" stroke-width="1">
  <path d="M410.3,50.6 L416.2,47.3 H430 L424,50.6 Z"/>
  <path d="M410.3,58.8 L416.2,55.4 H430 L424,58.8 Z"/>
 </g>
 <!-- zoom extents -->
 <rect x="476.5" y="48.5" width="15" height="9" fill="none" stroke="#a6a6a6" stroke-width="1"/>
 <path d="M473,47 V44 H476 M492,44 H495 V47 M495,58.5 V61.5 H492 M476,61.5 H473 V58.5" fill="none" stroke="#111" stroke-width="1.4"/>
 <!-- magnifier -->
 <line x1="518.5" y1="55.6" x2="524.2" y2="61.2" stroke="#6a6a6a" stroke-width="2.2"/>
 <circle cx="514" cy="50.9" r="6.4" fill="#f9f9f9" stroke="#5a5a5a" stroke-width="0.9"/>
 <path d="M510.2,50.9 H517.8 M514,47.1 V54.7" stroke="#9a1a1e" stroke-width="2"/>
 <!-- cube -->
 <path d="M539.3,44.3 H553.6 L556.8,47.6 V61.3 H542.7 L539.3,58 Z M539.3,44.3 L542.7,47.6 H556.8 M542.7,47.6 V61.3" fill="none" stroke="#acacac" stroke-width="1"/>
 <!-- axes -->
 <path d="M577.5,55.4 V44.5" stroke="#48e048" stroke-width="1.3"/>
 <path d="M574.6,47 L577.5,43.3 L580.4,47 Z" fill="#48e048"/>
 <path d="M577.5,55.4 H588.8" stroke="#e8485a" stroke-width="1.3"/>
 <path d="M587.3,52.6 L590.6,55.4 L587.3,58.2 Z" fill="#e8485a"/>
 <path d="M577.5,55.4 L573.2,59.6" stroke="#3548e8" stroke-width="1.2"/>
 <path d="M572,57.2 L571.8,60.6 L575,60.5 Z" fill="#3548e8"/>
 <!-- export -->
 <rect x="601.8" y="49.8" width="14.8" height="11.4" fill="#fff" stroke="#7fb4d8" stroke-width="1"/>
 <line x1="601.3" y1="49.8" x2="613" y2="49.8" stroke="#2a86c6" stroke-width="1.3"/>
 <path d="M613.1,43.4 H622.6 V52.7 L619.9,50.4 L613.4,56.5 L609.4,52.5 L615.9,46.3 Z" fill="#fff" fill-opacity="0.3" stroke="#2a86c6" stroke-width="1.1"/>
</svg>

<svg width="1100" height="566" style="left:0;top:0">
 <g stroke="#000" stroke-width="2.1" fill="none">
  <path d="M370.5,511 V429.5 Q370.5,427.3 372.5,427.3 H696"/>
  <path d="M370.5,441.2 H696"/>
  <path d="M382,427.3 V441.2 M429.3,427.3 V511 M510.2,427.3 V441.2 M544.2,427.3 V441.2 M620,427.3 V441.2 M648.5,427.3 V441.2 M685.4,427.3 V441.2"/>
  <path d="M370.5,460.8 H429.3 M370.5,480.7 H429.3 M370.5,491.2 H429.3 M370.5,501.3 H429.3"/>
  <path d="M385.3,480.7 V511"/>
  <path d="M462,441.2 V511 M429.3,490.3 H462"/>
  <path d="M462,454.3 H575.5 M462,468.1 H575.5 M462,481 H696"/>
  <path d="M575.5,441.2 V511 M575.5,491.1 H696 M635.4,481 V491.1"/>
  <path d="M44.5,511 V503.5 Q44.5,501.3 46.5,501.3 H370.5"/>
 </g>
 <path d="M62.5,501.3 V511 M278.6,501.3 V511 M322.7,501.3 V511 M346.5,501.3 V511" stroke="#000" stroke-width="1.4"/>
 <rect x="480.8" y="482.5" width="70.5" height="28" rx="1.5" fill="#000"/>
</svg>

<svg width="1100" height="566" style="left:0;top:0">
 <path d="M432.5,498.1 H439 V497.1 H444.5 V507.3 H442.1 V506.4 H436.2 V505.5 H432.5 Z" fill="none" stroke="#000" stroke-width="0.9"/>
 <circle cx="453.4" cy="502.4" r="5" fill="none" stroke="#000" stroke-width="1.9" stroke-dasharray="2.8,0.8"/>
 <path d="M447,502.4 H455.8 M453.4,500 V508.6" stroke="#000" stroke-width="0.9"/>
 <g fill="#fff">
  <path d="M489.6,500 L492,494.5 L494.4,500 Z"/>
  <rect x="491.2" y="491.5" width="1.6" height="1.4"/>
  <rect x="497" y="498.2" width="1.6" height="1.6"/>
  <rect x="504.5" y="503" width="1.6" height="1.6"/><rect x="511" y="503.3" width="1.8" height="1"/><rect x="517.3" y="503" width="1.6" height="1.6"/>
  <rect x="524" y="503.2" width="1" height="1.2"/><rect x="530" y="503" width="1.2" height="1.8"/><rect x="536.3" y="503" width="1.6" height="1.6"/><rect x="543" y="503" width="1.6" height="1.6"/>
 </g>
 <g fill="#666"><rect x="510.5" y="491.5" width="1" height="3"/><rect x="530.5" y="491.5" width="1" height="3"/><rect x="502" y="490" width="0.8" height="0.8"/><rect x="508" y="490" width="0.8" height="0.8"/><rect x="517" y="490" width="0.8" height="0.8"/><rect x="537" y="490" width="0.8" height="0.8"/></g>
</svg>
<div class="abs tbtext" style="font-size:4.6px;line-height:1;color:#000;letter-spacing:0.05px">
 <span style="left:373px;top:434px">Osa</span>
 <span style="left:386px;top:430px">Piirustusnumero</span>
 <span style="left:386px;top:436px">Tarkastusnumero</span>
 <span style="left:432px;top:434px">Osan tai kokoonpanon nimi ja kuvaus</span>
 <span style="left:514px;top:430px">Standard</span>
 <span style="left:514px;top:436px">Julkaisija</span>
 <span style="left:550px;top:434px">Muoto, malli, lajimerkki</span>
 <span style="left:625px;top:434px">Massa</span>
 <span style="left:653px;top:435px">Laatu</span>
 <span style="left:689px;top:434px">Kpl</span>
 <span style="left:374px;top:446px">Yleistoleranssit</span>
 <span style="left:432px;top:446px">Mittakaava</span>
 <span style="left:443px;top:466px;font-size:5px;color:#666">1:1</span>
 <span style="left:465px;top:443px">Tuote</span>
 <span style="left:466px;top:457px">Ulityy</span>
 <span style="left:465px;top:470px">Projekti</span>
 <span style="left:467px;top:475px">KARIR27BETA</span>
 <span style="left:580px;top:447.5px;font-size:5px;font-weight:bold;color:#111">RASTERKUVANOKAISU</span>
 <span style="left:373px;top:464px">Massa</span>
 <span style="left:420px;top:474px">kg</span>
 <span style="left:373px;top:485px">Suun</span>
 <span style="left:389px;top:485px;font-size:4.2px">2021-04-21 KR</span>
 <span style="left:373px;top:495px">Tark.</span>
 <span style="left:373px;top:505px">Hyv.</span>
 <span style="left:578px;top:486.5px">Ed.</span>
 <span style="left:639px;top:486.5px">Uusi</span>
 <span style="left:48px;top:506px">Merkki</span>
 <span style="left:128px;top:506px">Muutos</span>
 <span style="left:290px;top:506px">Pvm</span>
 <span style="left:329px;top:506px">Muutt.</span>
 <span style="left:353px;top:506px">Hyv.</span>
</div>
<div id="krp" class="abs" style="left:579.5px;top:496.6px;font-size:9px;color:#1c1c1c;letter-spacing:0.7px;white-space:nowrap">KRP27LB-27</div>
</body></html>
